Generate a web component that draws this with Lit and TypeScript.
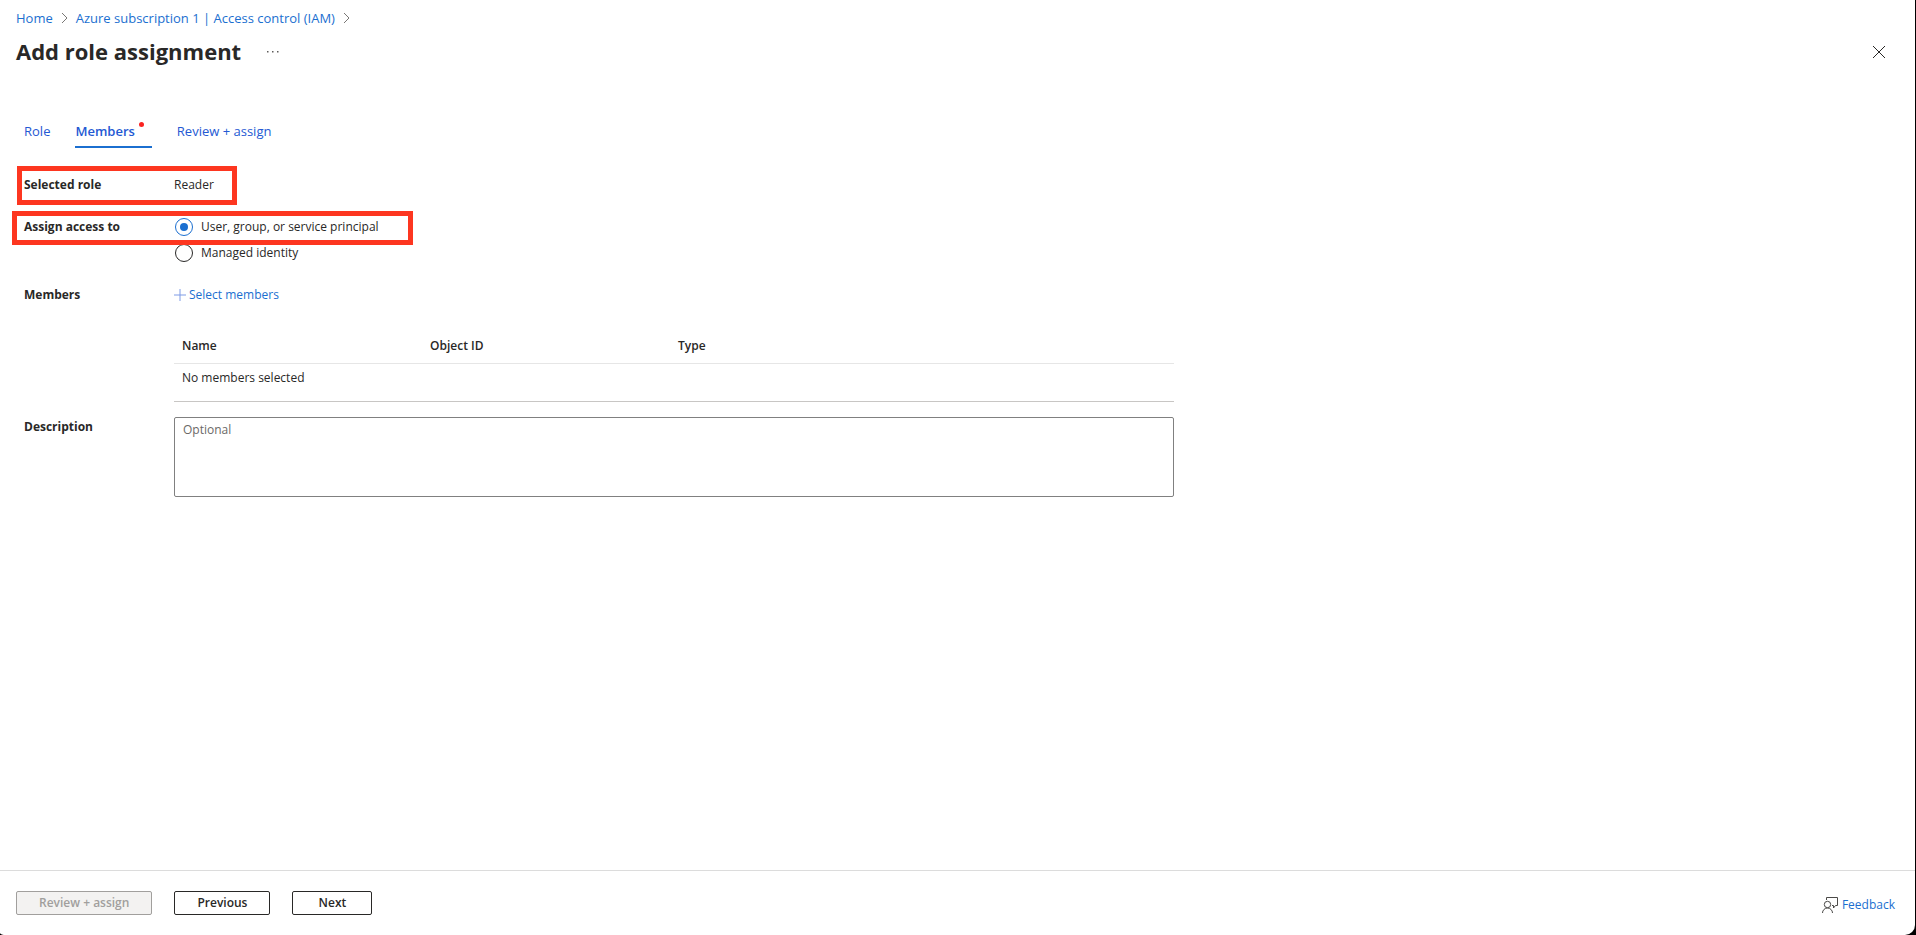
import { LitElement, html, css, svg } from "lit";
import { customElement, state } from "lit/decorators.js";

const chevron = html`<svg class="chevron" viewBox="0 0 7 12" aria-hidden="true">
  ${svg`<path d="M1 1l5 5-5 5" fill="none" stroke="#797775" />`}
</svg>`;

@customElement("app-root")
export class AppRoot extends LitElement {
  static styles = css`
    :host {
      display: block;
      min-height: 100vh;
      background: #000;
      font-family: "Segoe UI", "Open Sans", "Noto Sans", sans-serif;
      font-size: 12px;
      line-height: 18px;
      color: #292827;
    }
    *,
    *::before,
    *::after {
      box-sizing: border-box;
    }
    .window {
      min-height: 100vh;
      margin-right: 1px;
      background: #fff;
      border-radius: 0 0 10px 6px / 0 0 10px 2px;
      display: flex;
      flex-direction: column;
    }
    a {
      color: #1b6fd0;
      text-decoration: none;
    }
    svg {
      display: block;
      flex: none;
    }
    .crumbs {
      display: flex;
      align-items: center;
      gap: 8px;
      padding: 9px 16px 0;
      font-size: 13px;
    }
    .chevron {
      width: 7px;
      height: 12px;
    }
    .heading {
      display: flex;
      align-items: center;
      padding: 9px 28px 0 16px;
    }
    h1 {
      margin: 0;
      padding-bottom: 2px;
      font-size: 22px;
      line-height: 30px;
      font-weight: 700;
    }
    .icon-button {
      border: 0;
      background: none;
      padding: 0;
      width: 16px;
      height: 16px;
      display: grid;
      place-items: center;
    }
    .more {
      margin-left: 24px;
    }
    .close {
      margin-left: auto;
    }
    .tabs {
      display: flex;
      gap: 25px;
      padding: 52px 24px 0;
    }
    .tab {
      border: 0;
      border-bottom: 2px solid transparent;
      background: none;
      padding: 2px 0 6px;
      font: inherit;
      font-size: 13px;
      line-height: 18px;
      color: #2459d3;
      display: flex;
      gap: 4px;
    }
    .tab.active {
      font-weight: 600;
      border-bottom-color: #1b6fd0;
      padding-right: 8px;
    }
    .dot {
      width: 5px;
      height: 5px;
      border-radius: 50%;
      background: #fb2321;
    }
    .form {
      flex: 1;
      width: 100%;
      max-width: 1198px;
      padding: 28px 24px 0;
    }
    .row {
      display: grid;
      grid-template-columns: 150px 1fr;
      position: relative;
    }
    .label {
      font-weight: 700;
    }
    .marked::after {
      content: "";
      position: absolute;
      border: 5px solid #fd3620;
      pointer-events: none;
    }
    .mark-role::after {
      left: -7px;
      top: -10px;
      width: 220px;
      height: 39px;
    }
    .mark-access::after {
      left: -12px;
      top: -7px;
      width: 401px;
      height: 34px;
    }
    .access {
      margin-top: 24px;
    }
    .choices {
      display: grid;
      gap: 8px;
    }
    .choice {
      display: flex;
      align-items: center;
      gap: 8px;
      height: 18px;
    }
    .choice input {
      appearance: none;
      margin: 0 0 0 1px;
      width: 18px;
      height: 18px;
      border: 1px solid #292827;
      border-radius: 50%;
      display: grid;
      place-items: center;
    }
    .choice input:checked {
      border-color: #1b6fd0;
    }
    .choice input:checked::before {
      content: "";
      width: 8px;
      height: 8px;
      border-radius: 50%;
      background: #1b6fd0;
    }
    .members {
      margin-top: 24px;
    }
    .select {
      display: flex;
      align-items: center;
      gap: 3px;
      border: 0;
      background: none;
      padding: 0;
      font: inherit;
      color: #1b6fd0;
    }
    table {
      width: 100%;
      margin-top: 25px;
      border-collapse: collapse;
      table-layout: fixed;
      border-bottom: 1px solid #c8c6c4;
    }
    th,
    td {
      text-align: left;
      padding: 8px;
    }
    th {
      font-weight: 600;
      border-bottom: 1px solid #e6e6e6;
      width: 248px;
    }
    th:last-child {
      width: auto;
    }
    td {
      padding: 5px 8px 14px;
    }
    .description {
      margin-top: 15px;
    }
    .description .label {
      margin-top: 1px;
    }
    textarea {
      display: block;
      width: 100%;
      height: 80px;
      resize: none;
      border: 1px solid #808080;
      border-radius: 2px;
      padding: 3px 8px;
      font: inherit;
      line-height: 18px;
      color: inherit;
    }
    textarea::placeholder {
      color: #6b6967;
    }
    footer {
      border-top: 1px solid #dcdcdc;
      padding: 20px 20px 20px 16px;
      display: flex;
      align-items: center;
      gap: 22px;
    }
    .button {
      height: 24px;
      border: 1px solid #292827;
      border-radius: 2px;
      background: #fff;
      color: #292827;
      font: inherit;
      font-weight: 600;
      line-height: 18px;
      padding: 0 22px;
      min-width: 80px;
    }
    .button:disabled {
      border-color: #a19f9d;
      background: #f3f2f1;
      color: #a19f9d;
    }
    .feedback {
      margin-left: auto;
      padding-top: 3px;
      display: flex;
      align-items: center;
      gap: 4px;
    }
  `;

  @state() private target = "principal";

  private choice(value: string, text: string) {
    return html`<label class="choice">
      <input
        type="radio"
        name="target"
        .checked=${this.target === value}
        @change=${() => (this.target = value)}
      />
      ${text}
    </label>`;
  }

  render() {
    return html`<div class="window">
      <nav class="crumbs" aria-label="Breadcrumb">
        <a href="#home">Home</a>${chevron}
        <a href="#iam">Azure subscription 1 | Access control (IAM)</a>${chevron}
      </nav>
      <header class="heading">
        <h1>Add role assignment</h1>
        <button class="icon-button more" aria-label="More">
          <svg width="12" height="2" viewBox="0 0 12 2">
            <path d="M0 0h1.5v1.5H0zM5 0h1.5v1.5H5zM10 0h1.5v1.5H10z" fill="#605e5c" />
          </svg>
        </button>
        <button class="icon-button close" aria-label="Close">
          <svg width="12" height="12" viewBox="0 0 12 12">
            <path d="M0 0l12 12M12 0L0 12" stroke="#292827" fill="none" />
          </svg>
        </button>
      </header>
      <div class="tabs" role="tablist">
        <button class="tab" role="tab">Role</button>
        <button class="tab active" role="tab" aria-selected="true">
          Members<span class="dot"></span>
        </button>
        <button class="tab" role="tab">Review + assign</button>
      </div>
      <main class="form">
        <div class="row marked mark-role">
          <span class="label">Selected role</span>
          <span>Reader</span>
        </div>
        <div class="row marked mark-access access" role="radiogroup" aria-labelledby="access">
          <span class="label" id="access">Assign access to</span>
          <div class="choices">
            ${this.choice("principal", "User, group, or service principal")}
            ${this.choice("identity", "Managed identity")}
          </div>
        </div>
        <div class="row members">
          <span class="label">Members</span>
          <div>
            <button class="select">
              <svg width="12" height="12" viewBox="0 0 12 12">
                <path d="M6 0v12M0 6h12" stroke="#7f9be6" fill="none" />
              </svg>
              Select members
            </button>
            <table>
              <thead>
                <tr>
                  <th>Name</th>
                  <th>Object ID</th>
                  <th>Type</th>
                </tr>
              </thead>
              <tbody>
                <tr>
                  <td colspan="3">No members selected</td>
                </tr>
              </tbody>
            </table>
          </div>
        </div>
        <div class="row description">
          <label class="label" for="description">Description</label>
          <textarea id="description" placeholder="Optional"></textarea>
        </div>
      </main>
      <footer>
        <button class="button" disabled>Review + assign</button>
        <button class="button">Previous</button>
        <button class="button">Next</button>
        <a class="feedback" href="#feedback">
          <svg width="16" height="16" viewBox="0 0 16 16" fill="none" stroke="#4b4a48">
            <circle cx="5.5" cy="7.5" r="3.2" />
            <path d="M.5 16a5 5 0 0 1 10 0" />
            <path d="M4.500 3V.5h11v8h-2l-2 2.500v-2.500h-1.500" />
          </svg>
          Feedback
        </a>
      </footer>
    </div>`;
  }
}
